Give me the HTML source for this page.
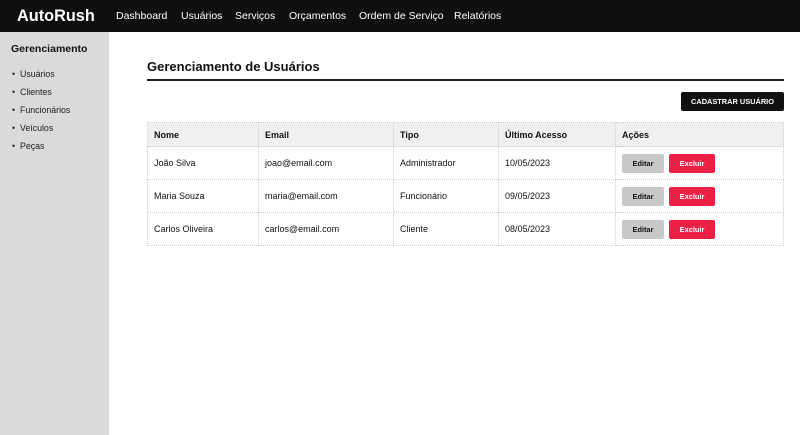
<!DOCTYPE html><html><head><meta charset="utf-8"><style>
*{margin:0;padding:0;box-sizing:border-box}
body{width:800px;height:435px;overflow:hidden;font-family:"Liberation Sans",sans-serif;background:#fff;position:relative;color:#111}
.top{position:absolute;left:0;top:0;width:800px;height:32px;background:#0f0f0f;color:#fff}
.logo{position:absolute;left:17px;top:7px;font-size:16.3px;font-weight:bold}
.nav{position:absolute;top:10px;font-size:10.5px}
.side{position:absolute;left:0;top:32px;width:109px;height:403px;background:#dadada}
.side h3{position:absolute;left:11px;top:11px;font-size:10.5px}
.side .i{position:absolute;left:12px;font-size:8.8px;color:#222}
h2{position:absolute;left:147px;top:59px;font-size:13px}
.hr{position:absolute;left:147px;top:79px;width:637px;height:1.5px;background:#222}
.btn{position:absolute;left:681px;top:92px;width:103px;height:19px;background:#111;color:#fff;font-size:7.4px;font-weight:bold;text-align:center;line-height:19px;border-radius:2px}
table{position:absolute;left:147px;top:122px;width:637px;border-collapse:collapse;font-size:9px}
td,th{border:1px dotted #ccc;text-align:left;padding:0 6px}
th{background:#f0f0f0;height:24px}
td{height:33px}
.e,.x{display:inline-block;width:42px;height:19px;line-height:19px;text-align:center;font-size:7.4px;font-weight:bold;border-radius:2px;vertical-align:middle}
.e{background:#c8c8c8}
.x{background:#ec2045;color:#fff;width:46px;margin-left:5px}
</style></head><body>
<div class="top"><div class="logo">AutoRush</div>
<div class="nav" style="left:116px">Dashboard</div><div class="nav" style="left:181px">Usuários</div><div class="nav" style="left:235px">Serviços</div><div class="nav" style="left:289px">Orçamentos</div><div class="nav" style="left:359px">Ordem de Serviço</div><div class="nav" style="left:454px">Relatórios</div></div>
<div class="side"><h3>Gerenciamento</h3>
<div class="i" style="top:37px">•&nbsp; Usuários</div><div class="i" style="top:55px">•&nbsp; Clientes</div><div class="i" style="top:73px">•&nbsp; Funcionários</div><div class="i" style="top:91px">•&nbsp; Veículos</div><div class="i" style="top:109px">•&nbsp; Peças</div></div>
<h2>Gerenciamento de Usuários</h2><div class="hr"></div>
<div class="btn">CADASTRAR USUÁRIO</div>
<table>
<tr><th style="width:111px">Nome</th><th style="width:135px">Email</th><th style="width:105px">Tipo</th><th style="width:117px">Último Acesso</th><th>Ações</th></tr>
<tr><td>João Silva</td><td>joao@email.com</td><td>Administrador</td><td>10/05/2023</td><td><span class="e">Editar</span><span class="x">Excluir</span></td></tr>
<tr><td>Maria Souza</td><td>maria@email.com</td><td>Funcionário</td><td>09/05/2023</td><td><span class="e">Editar</span><span class="x">Excluir</span></td></tr>
<tr><td>Carlos Oliveira</td><td>carlos@email.com</td><td>Cliente</td><td>08/05/2023</td><td><span class="e">Editar</span><span class="x">Excluir</span></td></tr>
</table>
</body></html>
